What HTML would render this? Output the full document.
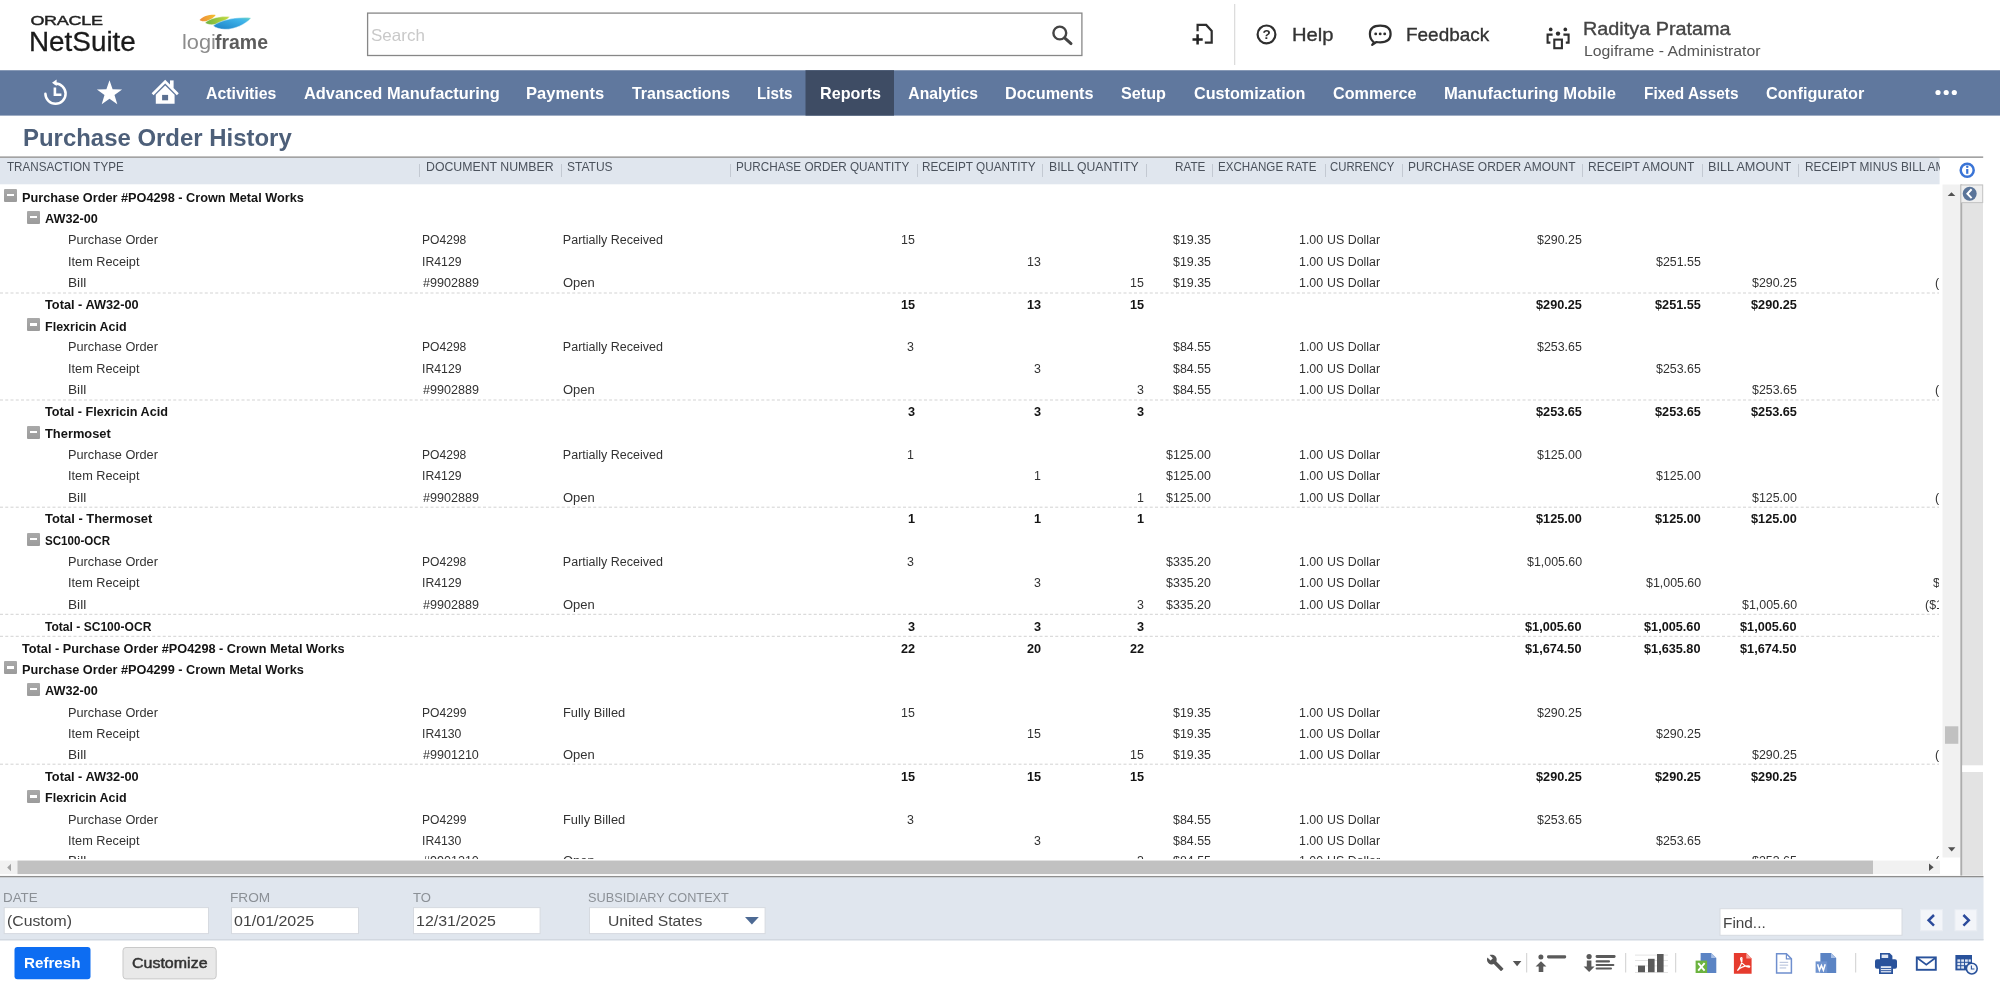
<!DOCTYPE html>
<html><head><meta charset="utf-8"><title>Purchase Order History</title>
<style>
html,body{margin:0;padding:0;background:#fff}
body{width:2000px;height:990px;overflow:hidden;position:relative;font-family:"Liberation Sans",sans-serif}
.a{position:absolute;box-sizing:border-box}
.bl{display:inline-block;width:0;height:0;vertical-align:baseline}
.t{position:absolute;line-height:20px;white-space:nowrap;transform-origin:0 0}
.clip{position:absolute;left:0;top:0;overflow:hidden}
.sep{position:absolute;top:164px;width:1px;height:12.5px;background:#c3c9d2}
.dash{position:absolute;left:0;width:1939.5px;height:0;border-top:1px dashed #cfcfcf}
.tm{position:absolute;width:12.5px;height:12.8px;background:linear-gradient(#a9a9a9,#9b9b9b);border-radius:1px}
.tm b{position:absolute;left:2.4px;top:5.2px;width:7.8px;height:2.5px;background:#fff}
.inp{position:absolute;box-sizing:border-box;background:#fff;border:1px solid #d6dae0;top:907.5px;height:26.5px}
</style></head><body><div id="root" style="position:absolute;left:0;top:0;width:2000px;height:990px;will-change:transform;overflow:hidden">
<svg class="a" style="left:0;top:0" width="2000" height="990" viewBox="0 0 2000 990">
<!-- search box -->
<rect x="367.6" y="13.1" width="714.3" height="42.4" fill="#fff" stroke="#878787" stroke-width="1.3"/>
<rect x="1234" y="4" width="1.3" height="61" fill="#dcdcdc"/>
<!-- nav -->
<rect x="0" y="70.25" width="2000" height="45.35" fill="#60789e"/>
<rect x="805.5" y="70.25" width="88.5" height="45.35" fill="#3e4c64"/>
<!-- title underline + header band -->
<rect x="0" y="157.9" width="1939.6" height="26.4" fill="#e0e6ee"/>
<rect x="0" y="156.4" width="1983.2" height="1.5" fill="#9a9a9a"/>
<!-- v scrollbar -->
<rect x="1942.5" y="184.5" width="17.9" height="673" fill="#f1f1f1"/>
<rect x="1945" y="726.3" width="13.3" height="17.5" fill="#c1c1c1"/>
<!-- side panel -->
<rect x="1960.4" y="184.5" width="22.6" height="691" fill="#e3e3e3"/>
<rect x="1960.4" y="184.5" width="1.8" height="691" fill="#adadad"/>
<rect x="1962.2" y="765.3" width="20.8" height="6.7" fill="#fff"/>
<rect x="1960.9" y="185" width="21.8" height="17.6" fill="#efefef" stroke="#c4c4c4" stroke-width="1"/>
<!-- h scrollbar -->
<rect x="0" y="860.6" width="1940" height="13.5" fill="#f1f1f1"/>
<rect x="17.5" y="860.6" width="1855.5" height="13.5" fill="#c1c1c1"/>
<!-- filter panel -->
<rect x="0" y="877.2" width="1983.5" height="63.1" fill="#e0e6ee"/>

<rect x="0" y="939" width="1983.5" height="1.4" fill="#d2d8e0"/>
<rect x="0" y="875.95" width="1983.5" height="1.35" fill="#8e8e8e"/>
<g fill="#fff" stroke="#d6dae0" stroke-width="1">
<rect x="4.2" y="907.6" width="204.3" height="26"/>
<rect x="231.5" y="907.6" width="127" height="26"/>
<rect x="413.5" y="907.6" width="126.6" height="26"/>
<rect x="589.5" y="907.6" width="175.6" height="26"/>
<rect x="1720" y="908.7" width="182" height="26.6"/>
</g>
<g fill="#f3f5f9" stroke="#e9edf3" stroke-width="1">
<rect x="1920.5" y="909.7" width="22" height="21"/>
<rect x="1955" y="909.7" width="21.7" height="21"/>
</g>
<!-- buttons -->
<rect x="14.5" y="947" width="76" height="32.3" rx="3" fill="#0d6df2"/>
<rect x="123" y="947.5" width="93.2" height="31.4" rx="3" fill="#e9e9e9" stroke="#c9c9c9" stroke-width="1"/>
</svg>
<!-- ===== texts ===== -->
<span id="t0" class="t" style="left:371.23px;top:25.00px;font-size:16.5px;color:#c9c9c9;transform:scaleX(1.0305);">Search</span>
<span id="t1" class="t" style="left:1292.34px;top:25.00px;font-size:19px;color:#333;transform:scaleX(1.0620);-webkit-text-stroke:0.35px #333;">Help</span>
<span id="t2" class="t" style="left:1406.20px;top:25.00px;font-size:19px;color:#333;transform:scaleX(0.9973);-webkit-text-stroke:0.35px #333;">Feedback</span>
<span id="t3" class="t" style="left:1583.37px;top:19.00px;font-size:19px;color:#444;transform:scaleX(1.0432);-webkit-text-stroke:0.35px #444;">Raditya Pratama</span>
<span id="t4" class="t" style="left:1583.70px;top:41.00px;font-size:15.2px;color:#555;transform:scaleX(1.0406);">Logiframe - Administrator</span>
<span id="t5" class="t" style="left:28.72px;top:32.00px;font-size:27.3px;color:#1a1a1a;transform:scaleX(1.0202);-webkit-text-stroke:0.3px #1a1a1a;">NetSuite</span>
<span id="t6" class="t" style="left:181.83px;top:32.00px;font-size:20px;color:#8c8c8c;transform:scaleX(1.0898);">logi</span>
<span id="t7" class="t" style="left:214.87px;top:32.00px;font-size:20px;color:#5c5c5c;font-weight:700;transform:scaleX(0.9727);">frame</span>
<span id="t8" class="t" style="left:206.31px;top:84.00px;font-size:15.7px;color:#fff;font-weight:700;transform:scaleX(1.0083);">Activities</span>
<span id="t9" class="t" style="left:304.29px;top:84.00px;font-size:15.7px;color:#fff;font-weight:700;transform:scaleX(1.0448);">Advanced Manufacturing</span>
<span id="t10" class="t" style="left:525.59px;top:84.00px;font-size:15.7px;color:#fff;font-weight:700;transform:scaleX(1.0534);">Payments</span>
<span id="t11" class="t" style="left:631.52px;top:84.00px;font-size:15.7px;color:#fff;font-weight:700;transform:scaleX(1.0140);">Transactions</span>
<span id="t12" class="t" style="left:757.18px;top:84.00px;font-size:15.7px;color:#fff;font-weight:700;transform:scaleX(0.9676);">Lists</span>
<span id="t13" class="t" style="left:819.62px;top:84.00px;font-size:15.7px;color:#fff;font-weight:700;transform:scaleX(1.0297);">Reports</span>
<span id="t14" class="t" style="left:908.31px;top:84.00px;font-size:15.7px;color:#fff;font-weight:700;">Analytics</span>
<span id="t15" class="t" style="left:1005.11px;top:84.00px;font-size:15.7px;color:#fff;font-weight:700;transform:scaleX(1.0365);">Documents</span>
<span id="t16" class="t" style="left:1121.23px;top:84.00px;font-size:15.7px;color:#fff;font-weight:700;transform:scaleX(1.0310);">Setup</span>
<span id="t17" class="t" style="left:1194.04px;top:84.00px;font-size:15.7px;color:#fff;font-weight:700;transform:scaleX(1.0314);">Customization</span>
<span id="t18" class="t" style="left:1333.04px;top:84.00px;font-size:15.7px;color:#fff;font-weight:700;transform:scaleX(1.0299);">Commerce</span>
<span id="t19" class="t" style="left:1444.09px;top:84.00px;font-size:15.7px;color:#fff;font-weight:700;transform:scaleX(1.0609);">Manufacturing Mobile</span>
<span id="t20" class="t" style="left:1643.67px;top:84.00px;font-size:15.7px;color:#fff;font-weight:700;transform:scaleX(0.9819);">Fixed Assets</span>
<span id="t21" class="t" style="left:1766.03px;top:84.00px;font-size:15.7px;color:#fff;font-weight:700;transform:scaleX(1.0340);">Configurator</span>
<span id="t22" class="t" style="left:22.70px;top:128.00px;font-size:23.3px;color:#4d5f79;font-weight:700;transform:scaleX(1.0275);">Purchase Order History</span>
<div class="clip" style="width:1939.5px;height:184px"><span id="t23" class="t" style="left:6.74px;top:157.00px;font-size:13px;color:#4b525c;transform:scaleX(0.8946);">TRANSACTION TYPE</span>
<span id="t24" class="t" style="left:425.99px;top:157.00px;font-size:13px;color:#4b525c;transform:scaleX(0.9462);">DOCUMENT NUMBER</span>
<span id="t25" class="t" style="left:566.95px;top:157.00px;font-size:13px;color:#4b525c;transform:scaleX(0.9238);">STATUS</span>
<span id="t26" class="t" style="left:736.04px;top:157.00px;font-size:13px;color:#4b525c;transform:scaleX(0.9015);">PURCHASE ORDER QUANTITY</span>
<span id="t27" class="t" style="left:922.04px;top:157.00px;font-size:13px;color:#4b525c;transform:scaleX(0.9049);">RECEIPT QUANTITY</span>
<span id="t28" class="t" style="left:1048.50px;top:157.00px;font-size:13px;color:#4b525c;transform:scaleX(0.9389);">BILL QUANTITY</span>
<span id="t29" class="t" style="left:1174.54px;top:157.00px;font-size:13px;color:#4b525c;transform:scaleX(0.9036);">RATE</span>
<span id="t30" class="t" style="left:1218.05px;top:157.00px;font-size:13px;color:#4b525c;transform:scaleX(0.8927);">EXCHANGE RATE</span>
<span id="t31" class="t" style="left:1330.42px;top:157.00px;font-size:13px;color:#4b525c;transform:scaleX(0.8731);">CURRENCY</span>
<span id="t32" class="t" style="left:1407.72px;top:157.00px;font-size:13px;color:#4b525c;transform:scaleX(0.9205);">PURCHASE ORDER AMOUNT</span>
<span id="t33" class="t" style="left:1588.02px;top:157.00px;font-size:13px;color:#4b525c;transform:scaleX(0.9212);">RECEIPT AMOUNT</span>
<span id="t34" class="t" style="left:1707.96px;top:157.00px;font-size:13px;color:#4b525c;transform:scaleX(0.9748);">BILL AMOUNT</span>
<span id="t35" class="t" style="left:1805.23px;top:157.00px;font-size:13px;color:#4b525c;transform:scaleX(0.9120);">RECEIPT MINUS BILL AMOUNT</span><i class="sep" style="left:419.0px"></i><i class="sep" style="left:560.5px"></i><i class="sep" style="left:730.0px"></i><i class="sep" style="left:917.0px"></i><i class="sep" style="left:1042.0px"></i><i class="sep" style="left:1145.5px"></i><i class="sep" style="left:1211.5px"></i><i class="sep" style="left:1324.5px"></i><i class="sep" style="left:1402.0px"></i><i class="sep" style="left:1582.0px"></i><i class="sep" style="left:1701.5px"></i><i class="sep" style="left:1797.5px"></i></div>
<div class="clip" style="width:1938.9px;height:859.1px"><svg class="a" style="left:0;top:0" width="1940" height="860"><line x1="0" x2="1939.5" y1="293.00" y2="293.00" stroke="#d3d3d3" stroke-width="1" stroke-dasharray="3 2.25"/><line x1="0" x2="1939.5" y1="400.00" y2="400.00" stroke="#d3d3d3" stroke-width="1" stroke-dasharray="3 2.25"/><line x1="0" x2="1939.5" y1="507.20" y2="507.20" stroke="#d3d3d3" stroke-width="1" stroke-dasharray="3 2.25"/><line x1="0" x2="1939.5" y1="614.30" y2="614.30" stroke="#d3d3d3" stroke-width="1" stroke-dasharray="3 2.25"/><line x1="0" x2="1939.5" y1="636.30" y2="636.30" stroke="#d3d3d3" stroke-width="1" stroke-dasharray="3 2.25"/><line x1="0" x2="1939.5" y1="764.20" y2="764.20" stroke="#d3d3d3" stroke-width="1" stroke-dasharray="3 2.25"/></svg><i class="tm" style="left:4.3px;top:188.8px"><b></b></i><i class="tm" style="left:27.2px;top:210.8px"><b></b></i><i class="tm" style="left:27.2px;top:318.3px"><b></b></i><i class="tm" style="left:27.2px;top:425.8px"><b></b></i><i class="tm" style="left:27.2px;top:532.8px"><b></b></i><i class="tm" style="left:4.3px;top:660.9px"><b></b></i><i class="tm" style="left:27.2px;top:682.8px"><b></b></i><i class="tm" style="left:27.2px;top:790.0px"><b></b></i><span id="t36" class="t" style="left:21.65px;top:188.00px;font-size:12.5px;color:#141414;font-weight:700;transform:scaleX(1.0178);">Purchase Order #PO4298 - Crown Metal Works</span>
<span id="t37" class="t" style="left:44.68px;top:209.00px;font-size:12.5px;color:#141414;font-weight:700;transform:scaleX(1.0139);">AW32-00</span>
<span id="t38" class="t" style="left:67.95px;top:230.00px;font-size:12.5px;color:#323232;transform:scaleX(1.0195);">Purchase Order</span>
<span id="t39" class="t" style="left:422.41px;top:230.00px;font-size:12.5px;color:#323232;transform:scaleX(0.9660);">PO4298</span>
<span id="t40" class="t" style="left:562.87px;top:230.00px;font-size:12.5px;color:#323232;">Partially Received</span>
<span id="t41" class="t" style="left:900.54px;top:230.00px;font-size:12.5px;color:#323232;transform:scaleX(0.9920);">15</span>
<span id="t42" class="t" style="left:1172.85px;top:230.00px;font-size:12.5px;color:#323232;transform:scaleX(0.9920);">$19.35</span>
<span id="t43" class="t" style="left:1299.03px;top:230.00px;font-size:12.5px;color:#323232;transform:scaleX(0.9920);">1.00</span>
<span id="t44" class="t" style="left:1327.04px;top:230.00px;font-size:12.5px;color:#323232;transform:scaleX(0.9937);">US Dollar</span>
<span id="t45" class="t" style="left:1537.30px;top:230.00px;font-size:12.5px;color:#323232;transform:scaleX(0.9920);">$290.25</span>
<span id="t46" class="t" style="left:67.83px;top:252.00px;font-size:12.5px;color:#323232;transform:scaleX(1.0185);">Item Receipt</span>
<span id="t47" class="t" style="left:422.27px;top:252.00px;font-size:12.5px;color:#323232;transform:scaleX(0.9801);">IR4129</span>
<span id="t48" class="t" style="left:1026.81px;top:252.00px;font-size:12.5px;color:#323232;transform:scaleX(0.9920);">13</span>
<span id="t49" class="t" style="left:1172.85px;top:252.00px;font-size:12.5px;color:#323232;transform:scaleX(0.9920);">$19.35</span>
<span id="t50" class="t" style="left:1299.03px;top:252.00px;font-size:12.5px;color:#323232;transform:scaleX(0.9920);">1.00</span>
<span id="t51" class="t" style="left:1327.04px;top:252.00px;font-size:12.5px;color:#323232;transform:scaleX(0.9937);">US Dollar</span>
<span id="t52" class="t" style="left:1656.05px;top:252.00px;font-size:12.5px;color:#323232;transform:scaleX(0.9920);">$251.55</span>
<span id="t53" class="t" style="left:67.88px;top:273.00px;font-size:12.5px;color:#323232;transform:scaleX(1.0938);">Bill</span>
<span id="t54" class="t" style="left:423.34px;top:273.00px;font-size:12.5px;color:#323232;transform:scaleX(1.0059);">#9902889</span>
<span id="t55" class="t" style="left:563.29px;top:273.00px;font-size:12.5px;color:#323232;transform:scaleX(1.0380);">Open</span>
<span id="t56" class="t" style="left:1130.04px;top:273.00px;font-size:12.5px;color:#323232;transform:scaleX(0.9920);">15</span>
<span id="t57" class="t" style="left:1172.85px;top:273.00px;font-size:12.5px;color:#323232;transform:scaleX(0.9920);">$19.35</span>
<span id="t58" class="t" style="left:1299.03px;top:273.00px;font-size:12.5px;color:#323232;transform:scaleX(0.9920);">1.00</span>
<span id="t59" class="t" style="left:1327.04px;top:273.00px;font-size:12.5px;color:#323232;transform:scaleX(0.9937);">US Dollar</span>
<span id="t60" class="t" style="left:1752.30px;top:273.00px;font-size:12.5px;color:#323232;transform:scaleX(0.9920);">$290.25</span>
<span id="t61" class="t" style="left:1935.23px;top:273.00px;font-size:12.5px;color:#323232;transform:scaleX(0.9920);">($38.70)</span>
<span id="t62" class="t" style="left:44.86px;top:295.00px;font-size:12.5px;color:#141414;font-weight:700;transform:scaleX(1.0216);">Total - AW32-00</span>
<span id="t63" class="t" style="left:900.50px;top:295.00px;font-size:12.5px;color:#141414;font-weight:700;transform:scaleX(1.0160);">15</span>
<span id="t64" class="t" style="left:1026.85px;top:295.00px;font-size:12.5px;color:#141414;font-weight:700;transform:scaleX(1.0160);">13</span>
<span id="t65" class="t" style="left:1130.00px;top:295.00px;font-size:12.5px;color:#141414;font-weight:700;transform:scaleX(1.0160);">15</span>
<span id="t66" class="t" style="left:1535.96px;top:295.00px;font-size:12.5px;color:#141414;font-weight:700;transform:scaleX(1.0160);">$290.25</span>
<span id="t67" class="t" style="left:1654.71px;top:295.00px;font-size:12.5px;color:#141414;font-weight:700;transform:scaleX(1.0160);">$251.55</span>
<span id="t68" class="t" style="left:1750.96px;top:295.00px;font-size:12.5px;color:#141414;font-weight:700;transform:scaleX(1.0160);">$290.25</span>
<span id="t69" class="t" style="left:45.07px;top:317.00px;font-size:12.5px;color:#141414;font-weight:700;">Flexricin Acid</span>
<span id="t70" class="t" style="left:67.95px;top:337.00px;font-size:12.5px;color:#323232;transform:scaleX(1.0195);">Purchase Order</span>
<span id="t71" class="t" style="left:422.41px;top:337.00px;font-size:12.5px;color:#323232;transform:scaleX(0.9660);">PO4298</span>
<span id="t72" class="t" style="left:562.87px;top:337.00px;font-size:12.5px;color:#323232;">Partially Received</span>
<span id="t73" class="t" style="left:907.40px;top:337.00px;font-size:12.5px;color:#323232;transform:scaleX(0.9920);">3</span>
<span id="t74" class="t" style="left:1172.85px;top:337.00px;font-size:12.5px;color:#323232;transform:scaleX(0.9920);">$84.55</span>
<span id="t75" class="t" style="left:1299.03px;top:337.00px;font-size:12.5px;color:#323232;transform:scaleX(0.9920);">1.00</span>
<span id="t76" class="t" style="left:1327.04px;top:337.00px;font-size:12.5px;color:#323232;transform:scaleX(0.9937);">US Dollar</span>
<span id="t77" class="t" style="left:1537.30px;top:337.00px;font-size:12.5px;color:#323232;transform:scaleX(0.9920);">$253.65</span>
<span id="t78" class="t" style="left:67.83px;top:359.00px;font-size:12.5px;color:#323232;transform:scaleX(1.0185);">Item Receipt</span>
<span id="t79" class="t" style="left:422.27px;top:359.00px;font-size:12.5px;color:#323232;transform:scaleX(0.9801);">IR4129</span>
<span id="t80" class="t" style="left:1033.65px;top:359.00px;font-size:12.5px;color:#323232;transform:scaleX(0.9920);">3</span>
<span id="t81" class="t" style="left:1172.85px;top:359.00px;font-size:12.5px;color:#323232;transform:scaleX(0.9920);">$84.55</span>
<span id="t82" class="t" style="left:1299.03px;top:359.00px;font-size:12.5px;color:#323232;transform:scaleX(0.9920);">1.00</span>
<span id="t83" class="t" style="left:1327.04px;top:359.00px;font-size:12.5px;color:#323232;transform:scaleX(0.9937);">US Dollar</span>
<span id="t84" class="t" style="left:1656.05px;top:359.00px;font-size:12.5px;color:#323232;transform:scaleX(0.9920);">$253.65</span>
<span id="t85" class="t" style="left:67.88px;top:380.00px;font-size:12.5px;color:#323232;transform:scaleX(1.0938);">Bill</span>
<span id="t86" class="t" style="left:423.34px;top:380.00px;font-size:12.5px;color:#323232;transform:scaleX(1.0059);">#9902889</span>
<span id="t87" class="t" style="left:563.29px;top:380.00px;font-size:12.5px;color:#323232;transform:scaleX(1.0380);">Open</span>
<span id="t88" class="t" style="left:1136.90px;top:380.00px;font-size:12.5px;color:#323232;transform:scaleX(0.9920);">3</span>
<span id="t89" class="t" style="left:1172.85px;top:380.00px;font-size:12.5px;color:#323232;transform:scaleX(0.9920);">$84.55</span>
<span id="t90" class="t" style="left:1299.03px;top:380.00px;font-size:12.5px;color:#323232;transform:scaleX(0.9920);">1.00</span>
<span id="t91" class="t" style="left:1327.04px;top:380.00px;font-size:12.5px;color:#323232;transform:scaleX(0.9937);">US Dollar</span>
<span id="t92" class="t" style="left:1752.30px;top:380.00px;font-size:12.5px;color:#323232;transform:scaleX(0.9920);">$253.65</span>
<span id="t93" class="t" style="left:1935.23px;top:380.00px;font-size:12.5px;color:#323232;transform:scaleX(0.9920);">($0.00)</span>
<span id="t94" class="t" style="left:44.86px;top:402.00px;font-size:12.5px;color:#141414;font-weight:700;transform:scaleX(1.0118);">Total - Flexricin Acid</span>
<span id="t95" class="t" style="left:907.78px;top:402.00px;font-size:12.5px;color:#141414;font-weight:700;transform:scaleX(1.0160);">3</span>
<span id="t96" class="t" style="left:1034.03px;top:402.00px;font-size:12.5px;color:#141414;font-weight:700;transform:scaleX(1.0160);">3</span>
<span id="t97" class="t" style="left:1137.28px;top:402.00px;font-size:12.5px;color:#141414;font-weight:700;transform:scaleX(1.0160);">3</span>
<span id="t98" class="t" style="left:1535.96px;top:402.00px;font-size:12.5px;color:#141414;font-weight:700;transform:scaleX(1.0160);">$253.65</span>
<span id="t99" class="t" style="left:1654.71px;top:402.00px;font-size:12.5px;color:#141414;font-weight:700;transform:scaleX(1.0160);">$253.65</span>
<span id="t100" class="t" style="left:1750.96px;top:402.00px;font-size:12.5px;color:#141414;font-weight:700;transform:scaleX(1.0160);">$253.65</span>
<span id="t101" class="t" style="left:44.86px;top:424.00px;font-size:12.5px;color:#141414;font-weight:700;transform:scaleX(1.0297);">Thermoset</span>
<span id="t102" class="t" style="left:67.95px;top:445.00px;font-size:12.5px;color:#323232;transform:scaleX(1.0195);">Purchase Order</span>
<span id="t103" class="t" style="left:422.41px;top:445.00px;font-size:12.5px;color:#323232;transform:scaleX(0.9660);">PO4298</span>
<span id="t104" class="t" style="left:562.87px;top:445.00px;font-size:12.5px;color:#323232;">Partially Received</span>
<span id="t105" class="t" style="left:907.46px;top:445.00px;font-size:12.5px;color:#323232;transform:scaleX(0.9920);">1</span>
<span id="t106" class="t" style="left:1165.97px;top:445.00px;font-size:12.5px;color:#323232;transform:scaleX(0.9920);">$125.00</span>
<span id="t107" class="t" style="left:1299.03px;top:445.00px;font-size:12.5px;color:#323232;transform:scaleX(0.9920);">1.00</span>
<span id="t108" class="t" style="left:1327.04px;top:445.00px;font-size:12.5px;color:#323232;transform:scaleX(0.9937);">US Dollar</span>
<span id="t109" class="t" style="left:1537.27px;top:445.00px;font-size:12.5px;color:#323232;transform:scaleX(0.9920);">$125.00</span>
<span id="t110" class="t" style="left:67.83px;top:466.00px;font-size:12.5px;color:#323232;transform:scaleX(1.0185);">Item Receipt</span>
<span id="t111" class="t" style="left:422.27px;top:466.00px;font-size:12.5px;color:#323232;transform:scaleX(0.9801);">IR4129</span>
<span id="t112" class="t" style="left:1033.71px;top:466.00px;font-size:12.5px;color:#323232;transform:scaleX(0.9920);">1</span>
<span id="t113" class="t" style="left:1165.97px;top:466.00px;font-size:12.5px;color:#323232;transform:scaleX(0.9920);">$125.00</span>
<span id="t114" class="t" style="left:1299.03px;top:466.00px;font-size:12.5px;color:#323232;transform:scaleX(0.9920);">1.00</span>
<span id="t115" class="t" style="left:1327.04px;top:466.00px;font-size:12.5px;color:#323232;transform:scaleX(0.9937);">US Dollar</span>
<span id="t116" class="t" style="left:1656.02px;top:466.00px;font-size:12.5px;color:#323232;transform:scaleX(0.9920);">$125.00</span>
<span id="t117" class="t" style="left:67.88px;top:488.00px;font-size:12.5px;color:#323232;transform:scaleX(1.0938);">Bill</span>
<span id="t118" class="t" style="left:423.34px;top:488.00px;font-size:12.5px;color:#323232;transform:scaleX(1.0059);">#9902889</span>
<span id="t119" class="t" style="left:563.29px;top:488.00px;font-size:12.5px;color:#323232;transform:scaleX(1.0380);">Open</span>
<span id="t120" class="t" style="left:1136.96px;top:488.00px;font-size:12.5px;color:#323232;transform:scaleX(0.9920);">1</span>
<span id="t121" class="t" style="left:1165.97px;top:488.00px;font-size:12.5px;color:#323232;transform:scaleX(0.9920);">$125.00</span>
<span id="t122" class="t" style="left:1299.03px;top:488.00px;font-size:12.5px;color:#323232;transform:scaleX(0.9920);">1.00</span>
<span id="t123" class="t" style="left:1327.04px;top:488.00px;font-size:12.5px;color:#323232;transform:scaleX(0.9937);">US Dollar</span>
<span id="t124" class="t" style="left:1752.27px;top:488.00px;font-size:12.5px;color:#323232;transform:scaleX(0.9920);">$125.00</span>
<span id="t125" class="t" style="left:1935.23px;top:488.00px;font-size:12.5px;color:#323232;transform:scaleX(0.9920);">($0.00)</span>
<span id="t126" class="t" style="left:44.86px;top:509.00px;font-size:12.5px;color:#141414;font-weight:700;transform:scaleX(1.0322);">Total - Thermoset</span>
<span id="t127" class="t" style="left:907.68px;top:509.00px;font-size:12.5px;color:#141414;font-weight:700;transform:scaleX(1.0160);">1</span>
<span id="t128" class="t" style="left:1033.93px;top:509.00px;font-size:12.5px;color:#141414;font-weight:700;transform:scaleX(1.0160);">1</span>
<span id="t129" class="t" style="left:1137.18px;top:509.00px;font-size:12.5px;color:#141414;font-weight:700;transform:scaleX(1.0160);">1</span>
<span id="t130" class="t" style="left:1536.13px;top:509.00px;font-size:12.5px;color:#141414;font-weight:700;transform:scaleX(1.0160);">$125.00</span>
<span id="t131" class="t" style="left:1654.88px;top:509.00px;font-size:12.5px;color:#141414;font-weight:700;transform:scaleX(1.0160);">$125.00</span>
<span id="t132" class="t" style="left:1751.13px;top:509.00px;font-size:12.5px;color:#141414;font-weight:700;transform:scaleX(1.0160);">$125.00</span>
<span id="t133" class="t" style="left:44.67px;top:531.00px;font-size:12.5px;color:#141414;font-weight:700;transform:scaleX(0.9273);">SC100-OCR</span>
<span id="t134" class="t" style="left:67.95px;top:552.00px;font-size:12.5px;color:#323232;transform:scaleX(1.0195);">Purchase Order</span>
<span id="t135" class="t" style="left:422.41px;top:552.00px;font-size:12.5px;color:#323232;transform:scaleX(0.9660);">PO4298</span>
<span id="t136" class="t" style="left:562.87px;top:552.00px;font-size:12.5px;color:#323232;">Partially Received</span>
<span id="t137" class="t" style="left:907.40px;top:552.00px;font-size:12.5px;color:#323232;transform:scaleX(0.9920);">3</span>
<span id="t138" class="t" style="left:1165.97px;top:552.00px;font-size:12.5px;color:#323232;transform:scaleX(0.9920);">$335.20</span>
<span id="t139" class="t" style="left:1299.03px;top:552.00px;font-size:12.5px;color:#323232;transform:scaleX(0.9920);">1.00</span>
<span id="t140" class="t" style="left:1327.04px;top:552.00px;font-size:12.5px;color:#323232;transform:scaleX(0.9937);">US Dollar</span>
<span id="t141" class="t" style="left:1527.01px;top:552.00px;font-size:12.5px;color:#323232;transform:scaleX(0.9920);">$1,005.60</span>
<span id="t142" class="t" style="left:67.83px;top:573.00px;font-size:12.5px;color:#323232;transform:scaleX(1.0185);">Item Receipt</span>
<span id="t143" class="t" style="left:422.27px;top:573.00px;font-size:12.5px;color:#323232;transform:scaleX(0.9801);">IR4129</span>
<span id="t144" class="t" style="left:1033.65px;top:573.00px;font-size:12.5px;color:#323232;transform:scaleX(0.9920);">3</span>
<span id="t145" class="t" style="left:1165.97px;top:573.00px;font-size:12.5px;color:#323232;transform:scaleX(0.9920);">$335.20</span>
<span id="t146" class="t" style="left:1299.03px;top:573.00px;font-size:12.5px;color:#323232;transform:scaleX(0.9920);">1.00</span>
<span id="t147" class="t" style="left:1327.04px;top:573.00px;font-size:12.5px;color:#323232;transform:scaleX(0.9937);">US Dollar</span>
<span id="t148" class="t" style="left:1645.76px;top:573.00px;font-size:12.5px;color:#323232;transform:scaleX(0.9920);">$1,005.60</span>
<span id="t149" class="t" style="left:1933.37px;top:573.00px;font-size:12.5px;color:#323232;transform:scaleX(0.9920);">$1,005.60</span>
<span id="t150" class="t" style="left:67.88px;top:595.00px;font-size:12.5px;color:#323232;transform:scaleX(1.0938);">Bill</span>
<span id="t151" class="t" style="left:423.34px;top:595.00px;font-size:12.5px;color:#323232;transform:scaleX(1.0059);">#9902889</span>
<span id="t152" class="t" style="left:563.29px;top:595.00px;font-size:12.5px;color:#323232;transform:scaleX(1.0380);">Open</span>
<span id="t153" class="t" style="left:1136.90px;top:595.00px;font-size:12.5px;color:#323232;transform:scaleX(0.9920);">3</span>
<span id="t154" class="t" style="left:1165.97px;top:595.00px;font-size:12.5px;color:#323232;transform:scaleX(0.9920);">$335.20</span>
<span id="t155" class="t" style="left:1299.03px;top:595.00px;font-size:12.5px;color:#323232;transform:scaleX(0.9920);">1.00</span>
<span id="t156" class="t" style="left:1327.04px;top:595.00px;font-size:12.5px;color:#323232;transform:scaleX(0.9937);">US Dollar</span>
<span id="t157" class="t" style="left:1742.01px;top:595.00px;font-size:12.5px;color:#323232;transform:scaleX(0.9920);">$1,005.60</span>
<span id="t158" class="t" style="left:1925.23px;top:595.00px;font-size:12.5px;color:#323232;transform:scaleX(0.9920);">($1,005.60)</span>
<span id="t159" class="t" style="left:44.86px;top:617.00px;font-size:12.5px;color:#141414;font-weight:700;transform:scaleX(0.9653);">Total - SC100-OCR</span>
<span id="t160" class="t" style="left:907.78px;top:617.00px;font-size:12.5px;color:#141414;font-weight:700;transform:scaleX(1.0160);">3</span>
<span id="t161" class="t" style="left:1034.03px;top:617.00px;font-size:12.5px;color:#141414;font-weight:700;transform:scaleX(1.0160);">3</span>
<span id="t162" class="t" style="left:1137.28px;top:617.00px;font-size:12.5px;color:#141414;font-weight:700;transform:scaleX(1.0160);">3</span>
<span id="t163" class="t" style="left:1525.37px;top:617.00px;font-size:12.5px;color:#141414;font-weight:700;transform:scaleX(1.0160);">$1,005.60</span>
<span id="t164" class="t" style="left:1644.12px;top:617.00px;font-size:12.5px;color:#141414;font-weight:700;transform:scaleX(1.0160);">$1,005.60</span>
<span id="t165" class="t" style="left:1740.37px;top:617.00px;font-size:12.5px;color:#141414;font-weight:700;transform:scaleX(1.0160);">$1,005.60</span>
<span id="t166" class="t" style="left:22.36px;top:639.00px;font-size:12.5px;color:#141414;font-weight:700;transform:scaleX(1.0179);">Total - Purchase Order #PO4298 - Crown Metal Works</span>
<span id="t167" class="t" style="left:900.65px;top:639.00px;font-size:12.5px;color:#141414;font-weight:700;transform:scaleX(1.0160);">22</span>
<span id="t168" class="t" style="left:1026.92px;top:639.00px;font-size:12.5px;color:#141414;font-weight:700;transform:scaleX(1.0160);">20</span>
<span id="t169" class="t" style="left:1130.15px;top:639.00px;font-size:12.5px;color:#141414;font-weight:700;transform:scaleX(1.0160);">22</span>
<span id="t170" class="t" style="left:1525.37px;top:639.00px;font-size:12.5px;color:#141414;font-weight:700;transform:scaleX(1.0160);">$1,674.50</span>
<span id="t171" class="t" style="left:1644.12px;top:639.00px;font-size:12.5px;color:#141414;font-weight:700;transform:scaleX(1.0160);">$1,635.80</span>
<span id="t172" class="t" style="left:1740.37px;top:639.00px;font-size:12.5px;color:#141414;font-weight:700;transform:scaleX(1.0160);">$1,674.50</span>
<span id="t173" class="t" style="left:21.65px;top:660.00px;font-size:12.5px;color:#141414;font-weight:700;transform:scaleX(1.0178);">Purchase Order #PO4299 - Crown Metal Works</span>
<span id="t174" class="t" style="left:44.68px;top:681.00px;font-size:12.5px;color:#141414;font-weight:700;transform:scaleX(1.0139);">AW32-00</span>
<span id="t175" class="t" style="left:67.95px;top:703.00px;font-size:12.5px;color:#323232;transform:scaleX(1.0195);">Purchase Order</span>
<span id="t176" class="t" style="left:422.41px;top:703.00px;font-size:12.5px;color:#323232;transform:scaleX(0.9671);">PO4299</span>
<span id="t177" class="t" style="left:562.84px;top:703.00px;font-size:12.5px;color:#323232;transform:scaleX(1.0289);">Fully Billed</span>
<span id="t178" class="t" style="left:900.54px;top:703.00px;font-size:12.5px;color:#323232;transform:scaleX(0.9920);">15</span>
<span id="t179" class="t" style="left:1172.85px;top:703.00px;font-size:12.5px;color:#323232;transform:scaleX(0.9920);">$19.35</span>
<span id="t180" class="t" style="left:1299.03px;top:703.00px;font-size:12.5px;color:#323232;transform:scaleX(0.9920);">1.00</span>
<span id="t181" class="t" style="left:1327.04px;top:703.00px;font-size:12.5px;color:#323232;transform:scaleX(0.9937);">US Dollar</span>
<span id="t182" class="t" style="left:1537.30px;top:703.00px;font-size:12.5px;color:#323232;transform:scaleX(0.9920);">$290.25</span>
<span id="t183" class="t" style="left:67.83px;top:724.00px;font-size:12.5px;color:#323232;transform:scaleX(1.0185);">Item Receipt</span>
<span id="t184" class="t" style="left:422.27px;top:724.00px;font-size:12.5px;color:#323232;transform:scaleX(0.9775);">IR4130</span>
<span id="t185" class="t" style="left:1026.79px;top:724.00px;font-size:12.5px;color:#323232;transform:scaleX(0.9920);">15</span>
<span id="t186" class="t" style="left:1172.85px;top:724.00px;font-size:12.5px;color:#323232;transform:scaleX(0.9920);">$19.35</span>
<span id="t187" class="t" style="left:1299.03px;top:724.00px;font-size:12.5px;color:#323232;transform:scaleX(0.9920);">1.00</span>
<span id="t188" class="t" style="left:1327.04px;top:724.00px;font-size:12.5px;color:#323232;transform:scaleX(0.9937);">US Dollar</span>
<span id="t189" class="t" style="left:1656.05px;top:724.00px;font-size:12.5px;color:#323232;transform:scaleX(0.9920);">$290.25</span>
<span id="t190" class="t" style="left:67.88px;top:745.00px;font-size:12.5px;color:#323232;transform:scaleX(1.0938);">Bill</span>
<span id="t191" class="t" style="left:423.34px;top:745.00px;font-size:12.5px;color:#323232;transform:scaleX(1.0040);">#9901210</span>
<span id="t192" class="t" style="left:563.29px;top:745.00px;font-size:12.5px;color:#323232;transform:scaleX(1.0380);">Open</span>
<span id="t193" class="t" style="left:1130.04px;top:745.00px;font-size:12.5px;color:#323232;transform:scaleX(0.9920);">15</span>
<span id="t194" class="t" style="left:1172.85px;top:745.00px;font-size:12.5px;color:#323232;transform:scaleX(0.9920);">$19.35</span>
<span id="t195" class="t" style="left:1299.03px;top:745.00px;font-size:12.5px;color:#323232;transform:scaleX(0.9920);">1.00</span>
<span id="t196" class="t" style="left:1327.04px;top:745.00px;font-size:12.5px;color:#323232;transform:scaleX(0.9937);">US Dollar</span>
<span id="t197" class="t" style="left:1752.30px;top:745.00px;font-size:12.5px;color:#323232;transform:scaleX(0.9920);">$290.25</span>
<span id="t198" class="t" style="left:1935.23px;top:745.00px;font-size:12.5px;color:#323232;transform:scaleX(0.9920);">($0.00)</span>
<span id="t199" class="t" style="left:44.86px;top:767.00px;font-size:12.5px;color:#141414;font-weight:700;transform:scaleX(1.0216);">Total - AW32-00</span>
<span id="t200" class="t" style="left:900.50px;top:767.00px;font-size:12.5px;color:#141414;font-weight:700;transform:scaleX(1.0160);">15</span>
<span id="t201" class="t" style="left:1026.75px;top:767.00px;font-size:12.5px;color:#141414;font-weight:700;transform:scaleX(1.0160);">15</span>
<span id="t202" class="t" style="left:1130.00px;top:767.00px;font-size:12.5px;color:#141414;font-weight:700;transform:scaleX(1.0160);">15</span>
<span id="t203" class="t" style="left:1535.96px;top:767.00px;font-size:12.5px;color:#141414;font-weight:700;transform:scaleX(1.0160);">$290.25</span>
<span id="t204" class="t" style="left:1654.71px;top:767.00px;font-size:12.5px;color:#141414;font-weight:700;transform:scaleX(1.0160);">$290.25</span>
<span id="t205" class="t" style="left:1750.96px;top:767.00px;font-size:12.5px;color:#141414;font-weight:700;transform:scaleX(1.0160);">$290.25</span>
<span id="t206" class="t" style="left:45.07px;top:788.00px;font-size:12.5px;color:#141414;font-weight:700;">Flexricin Acid</span>
<span id="t207" class="t" style="left:67.95px;top:810.00px;font-size:12.5px;color:#323232;transform:scaleX(1.0195);">Purchase Order</span>
<span id="t208" class="t" style="left:422.41px;top:810.00px;font-size:12.5px;color:#323232;transform:scaleX(0.9671);">PO4299</span>
<span id="t209" class="t" style="left:562.84px;top:810.00px;font-size:12.5px;color:#323232;transform:scaleX(1.0289);">Fully Billed</span>
<span id="t210" class="t" style="left:907.40px;top:810.00px;font-size:12.5px;color:#323232;transform:scaleX(0.9920);">3</span>
<span id="t211" class="t" style="left:1172.85px;top:810.00px;font-size:12.5px;color:#323232;transform:scaleX(0.9920);">$84.55</span>
<span id="t212" class="t" style="left:1299.03px;top:810.00px;font-size:12.5px;color:#323232;transform:scaleX(0.9920);">1.00</span>
<span id="t213" class="t" style="left:1327.04px;top:810.00px;font-size:12.5px;color:#323232;transform:scaleX(0.9937);">US Dollar</span>
<span id="t214" class="t" style="left:1537.30px;top:810.00px;font-size:12.5px;color:#323232;transform:scaleX(0.9920);">$253.65</span>
<span id="t215" class="t" style="left:67.83px;top:831.00px;font-size:12.5px;color:#323232;transform:scaleX(1.0185);">Item Receipt</span>
<span id="t216" class="t" style="left:422.27px;top:831.00px;font-size:12.5px;color:#323232;transform:scaleX(0.9775);">IR4130</span>
<span id="t217" class="t" style="left:1033.65px;top:831.00px;font-size:12.5px;color:#323232;transform:scaleX(0.9920);">3</span>
<span id="t218" class="t" style="left:1172.85px;top:831.00px;font-size:12.5px;color:#323232;transform:scaleX(0.9920);">$84.55</span>
<span id="t219" class="t" style="left:1299.03px;top:831.00px;font-size:12.5px;color:#323232;transform:scaleX(0.9920);">1.00</span>
<span id="t220" class="t" style="left:1327.04px;top:831.00px;font-size:12.5px;color:#323232;transform:scaleX(0.9937);">US Dollar</span>
<span id="t221" class="t" style="left:1656.05px;top:831.00px;font-size:12.5px;color:#323232;transform:scaleX(0.9920);">$253.65</span>
<span id="t222" class="t" style="left:67.88px;top:851.00px;font-size:12.5px;color:#323232;transform:scaleX(1.0938);">Bill</span>
<span id="t223" class="t" style="left:423.34px;top:851.00px;font-size:12.5px;color:#323232;transform:scaleX(1.0040);">#9901210</span>
<span id="t224" class="t" style="left:563.29px;top:851.00px;font-size:12.5px;color:#323232;transform:scaleX(1.0380);">Open</span>
<span id="t225" class="t" style="left:1136.90px;top:851.00px;font-size:12.5px;color:#323232;transform:scaleX(0.9920);">3</span>
<span id="t226" class="t" style="left:1172.85px;top:851.00px;font-size:12.5px;color:#323232;transform:scaleX(0.9920);">$84.55</span>
<span id="t227" class="t" style="left:1299.03px;top:851.00px;font-size:12.5px;color:#323232;transform:scaleX(0.9920);">1.00</span>
<span id="t228" class="t" style="left:1327.04px;top:851.00px;font-size:12.5px;color:#323232;transform:scaleX(0.9937);">US Dollar</span>
<span id="t229" class="t" style="left:1752.30px;top:851.00px;font-size:12.5px;color:#323232;transform:scaleX(0.9920);">$253.65</span>
<span id="t230" class="t" style="left:1935.23px;top:851.00px;font-size:12.5px;color:#323232;transform:scaleX(0.9920);">($0.00)</span></div>
<span id="t231" class="t" style="left:2.65px;top:888.00px;font-size:13px;color:#8b9096;transform:scaleX(1.0282);">DATE</span>
<span id="t232" class="t" style="left:229.88px;top:888.00px;font-size:13px;color:#8b9096;transform:scaleX(1.0512);">FROM</span>
<span id="t233" class="t" style="left:412.71px;top:888.00px;font-size:13px;color:#8b9096;transform:scaleX(1.0051);">TO</span>
<span id="t234" class="t" style="left:588.42px;top:888.00px;font-size:13px;color:#8b9096;transform:scaleX(0.9783);">SUBSIDIARY CONTEXT</span>
<span id="t235" class="t" style="left:6.52px;top:911.00px;font-size:15px;color:#444;transform:scaleX(1.0533);">(Custom)</span>
<span id="t236" class="t" style="left:234.38px;top:911.00px;font-size:15.5px;color:#444;transform:scaleX(1.0318);">01/01/2025</span>
<span id="t237" class="t" style="left:416.28px;top:911.00px;font-size:15.5px;color:#444;transform:scaleX(1.0297);">12/31/2025</span>
<span id="t238" class="t" style="left:608.29px;top:911.00px;font-size:15.5px;color:#444;transform:scaleX(1.0131);">United States</span>
<span id="t239" class="t" style="left:1722.74px;top:913.00px;font-size:14.5px;color:#444;transform:scaleX(1.0587);">Find...</span>
<span id="t240" class="t" style="left:24.49px;top:953.00px;font-size:15px;color:#fff;font-weight:700;transform:scaleX(1.0106);">Refresh</span>
<span id="t241" class="t" style="left:131.69px;top:953.00px;font-size:15px;color:#333;transform:scaleX(1.0658);-webkit-text-stroke:0.5px #333;">Customize</span>
<svg class="a" style="left:0;top:0" width="2000" height="990" viewBox="0 0 2000 990">
<defs>
<linearGradient id="go" x1="0" y1="0" x2="1" y2="0"><stop offset="0" stop-color="#ee8a3a"/><stop offset="1" stop-color="#f2c230"/></linearGradient>
<linearGradient id="gg" x1="0" y1="0" x2="1" y2="0"><stop offset="0" stop-color="#6db33f"/><stop offset="1" stop-color="#c6dc3f"/></linearGradient>
<linearGradient id="gb" x1="0" y1="1" x2="1" y2="0"><stop offset="0" stop-color="#1a7fc4"/><stop offset="0.75" stop-color="#3fb4ea"/><stop offset="1" stop-color="#5fd0c0"/></linearGradient>
</defs>
<!-- ORACLE wordmark -->
<text x="0" y="0" transform="translate(30.4 24.7) scale(1.395 1)" font-family="Liberation Sans, sans-serif" font-size="12.9" fill="#222" stroke="#222" stroke-width="0.4" letter-spacing="-0.2">ORACLE</text>
<!-- logiframe swoosh -->
<path d="M199.6 19.9 C203 16.4 209 14.5 215.7 14.9 C212.6 18.9 208 21.4 203.6 21.2 C201.6 21.1 200.3 20.6 199.6 19.9Z" fill="url(#go)"/>
<path d="M205.1 22.8 C210 18.4 219 16 229.8 16.7 C225.2 21.7 218 24.9 211.5 24.7 C208.5 24.6 206.2 23.9 205.1 22.8Z" fill="url(#gg)" stroke="#fff" stroke-width="0.45"/>
<path d="M213.2 25.8 C221 19.8 236 16.6 251.2 17.9 C245.2 24.7 234 29.5 225 29.3 C220 29.2 215.4 27.8 213.2 25.8Z" fill="url(#gb)" stroke="#fff" stroke-width="0.45"/>
<!-- nav: history -->
<g fill="none" stroke="#fff" stroke-width="2.5" stroke-linecap="round">
<path d="M45.4 93.8 A10.1 10.1 0 1 0 55.6 83.6"/>
<path d="M54.9 87.6 V94.8 H61.4" stroke-linejoin="miter" stroke-linecap="butt" stroke-width="2.6"/>
</g>
<path d="M52 82.8 L56.6 79.6 V86Z" fill="#fff"/>
<!-- nav: star -->
<path d="M109.5 80.2 L112.6 89.2 L122.1 89.4 L114.5 95.1 L117.3 104.2 L109.5 98.8 L101.7 104.2 L104.5 95.1 L96.9 89.4 L106.4 89.2Z" fill="#fff"/>
<!-- nav: home -->
<path d="M152.6 94.2 L165.2 81.6 L177.8 94.2" fill="none" stroke="#fff" stroke-width="2.7" stroke-linejoin="miter"/>
<path d="M155.8 94.8 L165.2 85.4 L174.6 94.8 V103.8 H155.8Z" fill="#fff"/>
<rect x="170" y="80.4" width="3.6" height="7.5" fill="#fff"/>
<rect x="162.1" y="94.9" width="6" height="5.4" fill="#5b7091"/>
<!-- nav dots -->
<circle cx="1938" cy="92.5" r="2.6" fill="#fff"/><circle cx="1946.2" cy="92.5" r="2.6" fill="#fff"/><circle cx="1954.3" cy="92.5" r="2.6" fill="#fff"/>
<!-- search icon -->
<circle cx="1059.8" cy="33" r="6.4" fill="none" stroke="#444" stroke-width="2.4"/>
<path d="M1064.6 37.9 L1071 43.6" stroke="#444" stroke-width="3" stroke-linecap="round"/>
<!-- new doc icon -->
<path d="M1197.6 31.2 V24.9 H1206.2 L1211.7 31 V42.7 H1204.8" fill="none" stroke="#2e2e2e" stroke-width="2.2"/>
<path d="M1192.5 39.4 H1202.7 M1197.6 34.3 V44.5" stroke="#222" stroke-width="2.5"/>
<!-- help icon -->
<circle cx="1266.5" cy="34.4" r="8.9" fill="none" stroke="#2e2e2e" stroke-width="2.2"/>
<text x="1266.5" y="39" text-anchor="middle" font-family="Liberation Sans, sans-serif" font-size="13.5" font-weight="700" fill="#2e2e2e">?</text>
<!-- feedback icon -->
<path d="M1374 42.3 Q1369.9 39.4 1369.9 34 Q1369.9 25.6 1380.2 25.6 Q1390.6 25.6 1390.6 34 Q1390.6 42.3 1380.2 42.3 Q1378 42.3 1376.4 42 L1372.2 44.8 Z" fill="none" stroke="#2e2e2e" stroke-width="2.2" stroke-linejoin="round"/>
<circle cx="1375.7" cy="33.9" r="1.45" fill="#2e2e2e"/><circle cx="1380.2" cy="33.9" r="1.45" fill="#2e2e2e"/><circle cx="1384.7" cy="33.9" r="1.45" fill="#2e2e2e"/>
<!-- role icon -->
<g fill="#2e2e2e"><circle cx="1550.7" cy="29.4" r="1.85"/><circle cx="1565.3" cy="29.4" r="1.85"/><circle cx="1558" cy="33.6" r="2.2"/></g>
<g fill="none" stroke="#2e2e2e" stroke-width="2.1">
<path d="M1552.6 34.6 H1547.6 V42.6 H1550.4"/>
<path d="M1563.4 34.6 H1568.6 V42.6 H1565.8"/>
<rect x="1554.3" y="39.6" width="7.6" height="8.6"/>
</g>
<!-- info icon -->
<circle cx="1967.2" cy="170.2" r="6.5" fill="#fff" stroke="#3a74d6" stroke-width="2.5"/>
<rect x="1966.15" y="169" width="2.2" height="4.8" fill="#3a74d6"/><circle cx="1967.25" cy="166.7" r="1.25" fill="#3a74d6"/>
<!-- side panel toggle -->
<circle cx="1969.7" cy="193.7" r="7" fill="#5a7499"/>
<path d="M1971.6 189.3 L1967.4 193.7 L1971.6 198.1" fill="none" stroke="#fff" stroke-width="2"/>
<!-- scroll arrows -->
<path d="M1947.7 196 L1951.5 192.2 L1955.3 196Z" fill="#505050"/>
<path d="M1948 847.2 L1955.4 847.2 L1951.7 851.4Z" fill="#505050"/>
<path d="M11 863.7 L11 871.3 L7.2 867.5Z" fill="#a3a3a3"/>
<path d="M1929 863.4 L1929 871 L1933.6 867.2Z" fill="#505050"/>
<!-- select triangle -->
<path d="M745 917 H758.8 L751.9 924.6Z" fill="#4d6a94"/>
<!-- prev / next chevrons -->
<path d="M1934 915 L1928.6 920.3 L1934 925.6" fill="none" stroke="#2b4a9b" stroke-width="2.5"/>
<path d="M1963.4 915 L1968.8 920.3 L1963.4 925.6" fill="none" stroke="#2b4a9b" stroke-width="2.5"/>
<!-- ===== toolbar ===== -->
<g fill="#cfcfcf"><rect x="1526.2" y="953" width="1" height="19.5"/><rect x="1625.2" y="953" width="1" height="19.5"/><rect x="1675.2" y="953" width="1" height="19.5"/><rect x="1855.2" y="953" width="1" height="19.5"/></g>
<!-- wrench -->
<g transform="translate(1488.2 954.6)">
<path d="M14.9 13.6 L8.2 6.9 C8.9 5.1 8.5 2.9 7 1.5 C5.5 0 3.2 -0.3 1.4 0.5 L4.6 3.7 L2.4 5.9 L-0.8 2.8 C-1.6 4.6 -1.3 6.8 0.2 8.3 C1.7 9.8 3.8 10.2 5.6 9.5 L12.3 16.2 C12.6 16.5 13.1 16.5 13.4 16.2 L15 14.6 C15.3 14.4 15.3 13.9 14.9 13.6Z" fill="#555"/>
</g>
<path d="M1512.8 961 H1521.4 L1517.1 966.2Z" fill="#555"/>
<!-- collapse -->
<g fill="#5a5a5a"><circle cx="1540.9" cy="957.1" r="2.5"/><rect x="1547" y="955.3" width="19.2" height="3.1" rx="1.4"/>
<path d="M1541 961.2 L1546.4 966.6 H1543.3 V972 H1538.7 V966.6 H1535.6Z"/></g>
<!-- expand -->
<g fill="#5a5a5a"><circle cx="1589.1" cy="956.6" r="2.6"/>
<path d="M1589.1 972 L1583.6 966.4 H1586.8 V960.6 H1591.4 V966.4 H1594.6Z"/>
<rect x="1595.6" y="955" width="20" height="2.9" rx="1.3"/><rect x="1595.6" y="960.3" width="14.4" height="2.2" rx="1"/><rect x="1595.6" y="963.9" width="18.8" height="2.2" rx="1"/><rect x="1595.6" y="967.4" width="16.4" height="2.2" rx="1"/></g>
<!-- chart -->
<g fill="#e3e3e3"><rect x="1635" y="954.6" width="33" height="1"/><rect x="1635" y="960" width="33" height="1"/><rect x="1635" y="965.4" width="33" height="1"/><rect x="1635" y="972" width="33" height="1"/></g>
<g fill="#5a5a5a"><rect x="1638" y="965.6" width="7" height="6.6"/><rect x="1648" y="958.8" width="6.6" height="13.4"/><rect x="1657" y="954" width="6.6" height="18.2"/></g>
<!-- excel -->
<path d="M1700.6 953 H1711.2 L1716.3 958 V973 H1700.6Z" fill="#5b84c4"/>
<path d="M1711.2 953 L1716.3 958 H1711.2Z" fill="#a9c0e6"/>
<rect x="1695.6" y="960.6" width="11.5" height="12.4" fill="#6cb33f"/>
<path d="M1698.2 963.2 L1704.6 970.6 M1704.6 963.2 L1698.2 970.6" stroke="#fff" stroke-width="1.9"/>
<!-- pdf -->
<path d="M1733.9 953 H1746.3 L1751.6 958.4 V973.8 H1733.9Z" fill="#e63b2e"/>
<path d="M1746.3 953 L1751.6 958.4 H1746.3Z" fill="#f6a79f"/>
<path d="M1737.4 970.6 C1740.6 966.6 1742.2 962.4 1742 958.6 C1742 957 1740.4 957.2 1740.6 959 C1741.2 963 1744.6 966.6 1748.8 967.2 C1750.2 967.2 1750 965.8 1748.2 965.8 C1744.2 965.8 1740 967.6 1737.4 970.6Z" fill="none" stroke="#fff" stroke-width="1.2"/>
<!-- doc -->
<path d="M1776.6 953.7 H1786.4 L1791.4 958.8 V973 H1776.6Z" fill="#fff" stroke="#6f8fce" stroke-width="1.5"/>
<path d="M1786.4 953.7 V958.8 H1791.4" fill="none" stroke="#6f8fce" stroke-width="1.2"/>
<g fill="#b8c4dc"><rect x="1779.6" y="961.8" width="8.6" height="1.1"/><rect x="1779.6" y="964.6" width="8.6" height="1.1"/><rect x="1779.6" y="967.4" width="6.6" height="1.1"/></g>
<!-- word -->
<path d="M1820.4 953 H1831 L1836.2 958 V973 H1820.4Z" fill="#5b84c4"/>
<path d="M1831 953 L1836.2 958 H1831Z" fill="#a9c0e6"/>
<rect x="1815.6" y="961.4" width="11.6" height="11.4" fill="#6f93cf"/>
<path d="M1817.6 964.2 L1819.4 970.2 L1821.4 965.4 L1823.4 970.2 L1825.2 964.2" fill="none" stroke="#fff" stroke-width="1.5"/>
<!-- print -->
<g fill="#29529b"><path d="M1880 953 H1889.6 L1892.4 955.8 V960 H1880Z"/>
<rect x="1875" y="959.2" width="22" height="9.6" rx="2"/>
<rect x="1879" y="964.6" width="14" height="9.4"/></g>
<rect x="1881.6" y="954.6" width="6.6" height="3.4" fill="#dfe6f3"/>
<rect x="1880.8" y="966.2" width="10.4" height="6.2" fill="#dfe6f3"/>
<g fill="#29529b"><rect x="1880.8" y="968" width="10.4" height="0.9"/><rect x="1880.8" y="970.2" width="10.4" height="0.9"/></g>
<!-- mail -->
<rect x="1916.8" y="957.4" width="19" height="12.4" fill="#fff" stroke="#29529b" stroke-width="1.9"/>
<path d="M1917 957.8 L1926.3 964.6 L1935.6 957.8" fill="none" stroke="#29529b" stroke-width="1.7"/>
<!-- schedule -->
<rect x="1955.4" y="955" width="16.6" height="15.4" fill="#29529b"/>
<g fill="#dfe6f3"><rect x="1957.4" y="959.4" width="2.8" height="2.4"/><rect x="1961.2" y="959.4" width="2.8" height="2.4"/><rect x="1965" y="959.4" width="2.8" height="2.4"/><rect x="1968.6" y="959.4" width="2.2" height="2.4"/>
<rect x="1957.4" y="962.8" width="2.8" height="2.4"/><rect x="1961.2" y="962.8" width="2.8" height="2.4"/><rect x="1965" y="962.8" width="2.8" height="2.4"/>
<rect x="1957.4" y="966.2" width="2.8" height="2.4"/><rect x="1961.2" y="966.2" width="2.8" height="2.4"/></g>
<circle cx="1971.8" cy="968.6" r="5.4" fill="#f3f6fb" stroke="#29529b" stroke-width="1.6"/>
<path d="M1971.4 965.4 V969 H1974.4" fill="none" stroke="#29529b" stroke-width="1.1"/>
</svg>

</div></body></html>
